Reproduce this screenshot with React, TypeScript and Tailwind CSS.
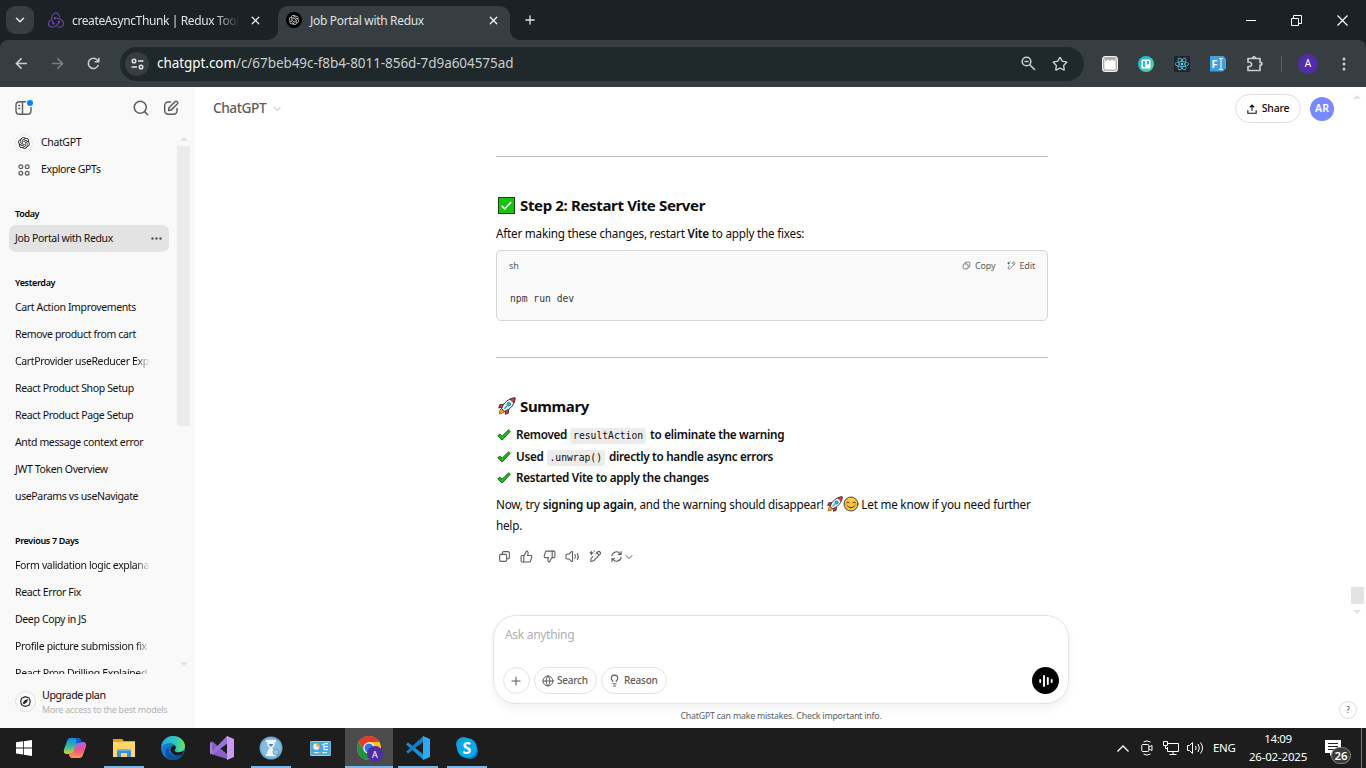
import type { ReactNode } from "react";
import { ChevronDown, Plus, X, Search, Globe, Lightbulb, ThumbsUp, ThumbsDown, Star } from "lucide-react";
import { RiOpenaiFill } from "react-icons/ri";
import { SiRedux, SiReact } from "react-icons/si";

/* ---------- emoji drawings ---------- */
const Rocket = ({ className }: { className: string }) => (
  <svg viewBox="0 0 20 20" className={className}>
    <path d="M7 8 2 8.500 .8 12l4.500-.5zM12 13l-.5 5-3.500 1.200.5-4.500z" fill="#e83a35" stroke="#222" strokeWidth=".9" />
    <path d="M4.500 12.500C2.500 13 1.500 16 1.300 18.700 4 18.500 7 17.500 7.500 15.500z" fill="#ff9f1a" stroke="#7b4a12" strokeWidth=".8" />
    <path d="M4 13C6 6.500 11.500 1.500 19 1c-.5 7.500-5.500 13-12 15z" fill="#e9f1f6" stroke="#222" strokeWidth="1" />
    <path d="M13.300 2.400C15 1.500 17 1.100 19 1c-.1 2-.5 4-1.400 5.700z" fill="#ee3936" stroke="#222" strokeWidth=".7" />
    <circle cx="12" cy="8" r="2" fill="#27b5ef" stroke="#38586a" strokeWidth=".8" />
    <path d="m7 13 4-4" stroke="#27b5ef" strokeWidth="1.700" />
  </svg>
);
const Smile = ({ className }: { className: string }) => (
  <svg viewBox="0 0 16 16" className={className} fill="none" strokeLinecap="round">
    <circle cx="8" cy="8" r="7" fill="#ffc83d" stroke="#333" strokeWidth=".9" />
    <path d="M3.500 6.700q1.300-1.700 2.600 0M9.900 6.700q1.300-1.700 2.600 0M4.200 9.700q3.800 4.400 7.600 0" stroke="#41330f" strokeWidth="1" />
    <circle cx="3.400" cy="9" r="1.200" fill="#ff9b3d" />
    <circle cx="12.600" cy="9" r="1.200" fill="#ff9b3d" />
  </svg>
);
const CheckBox = () => (
  <svg viewBox="0 0 17 17" className="h-[17px] w-[17px]">
    <rect x=".5" y=".5" width="16" height="16" fill="#16c60c" stroke="#1d3b1b" />
    <path d="m3.700 8.900 3 3 6.500-7" fill="none" stroke="#fff" strokeWidth="1.500" />
  </svg>
);
const GreenTick = () => (
  <svg viewBox="0 0 14 12" className="h-3 w-3.5 shrink-0">
    <path d="m.8 7 1.900-2 2.500 2.200L11.500.8l1.700 1.600-8 8.600z" fill="#16c60c" stroke="#1d4a1b" strokeWidth=".9" />
  </svg>
);

/* ---------- line icons ---------- */
const CopyIcon = ({ className }: { className: string }) => (
  <svg viewBox="0 0 24 24" className={className} fill="none" stroke="currentColor" strokeWidth="2">
    <rect x="3" y="8" width="13" height="13" rx="2.500" />
    <path d="M8 8V5.500A2.500 2.500 0 0 1 10.500 3h8A2.500 2.500 0 0 1 21 5.500v8a2.500 2.500 0 0 1-2.500 2.500H16" />
  </svg>
);
const PenSpark = ({ className }: { className: string }) => (
  <svg viewBox="0 0 24 24" className={className} fill="none" stroke="currentColor" strokeWidth="2" strokeLinejoin="round">
    <path d="M12.500 7 16 3.700a3 3 0 0 1 4.300 4.300L9.500 19.300Q8 21 3.300 21.200 3 16 4.700 14.500l2.800-2.800M14.500 5.500l4.200 4.200" />
    <path d="M4.500 1 6 4l3 1.500L6 7 4.500 10 3 7 0 5.500 3 4z" fill="currentColor" stroke="none" />
    <circle cx="10" cy="2" r="1.300" fill="currentColor" stroke="none" />
  </svg>
);
const SpeakerIcon = () => (
  <svg viewBox="0 0 18 16" className="h-[13px] w-[15px]" fill="none" stroke="currentColor" strokeWidth="1.300" strokeLinecap="round" strokeLinejoin="round">
    <path d="M9 2.200v11.600q-.8.500-1.500 0L4.500 11H2.400Q1 11 1 9.500v-3Q1 5 2.400 5h2.100l3-2.800Q8.200 1.700 9 2.200zM12 5.600q1.300 2.400 0 4.800M15 4.300q2.200 3.700 0 7.400" />
  </svg>
);
const RegenIcon = () => (
  <svg viewBox="0 0 24 24" className="h-[13px] w-[13px]" fill="none" stroke="currentColor" strokeWidth="2" strokeLinecap="round">
    <path d="M3.500 10.500A8.600 8.600 0 0 1 19 7M20.500 3v5h-5M20.500 13.500A8.600 8.600 0 0 1 5 17M3.500 21v-5h5" />
  </svg>
);
const PanelIcon = () => (
  <svg viewBox="0 0 18 16" className="h-4 w-[18px]" fill="none" stroke="currentColor" strokeWidth="1.400">
    <path d="M11 1.700H4.500Q1 1.700 1 5.200v5.600q0 3.500 3.500 3.500h8q3.500 0 3.500-3.500V7M7.500 1.700v12.600M3.200 5.500h2M3.200 8.500h2" />
  </svg>
);
const ComposeIcon = () => (
  <svg viewBox="0 0 16 16" className="h-4 w-4" fill="none" stroke="currentColor" strokeWidth="1.500" strokeLinecap="round" strokeLinejoin="round">
    <path d="M7.500 2H5.200A3.500 3.500 0 0 0 1.700 5.500v5.300a3.500 3.500 0 0 0 3.500 3.500h5.300a3.500 3.500 0 0 0 3.500-3.500V8.600" />
    <path d="m6 7.700 5.900-5.900a1.500 1.500 0 0 1 2.300 2.200L8.300 9.900l-2.700.5z" />
  </svg>
);
const Arrow = ({ className }: { className: string }) => (
  <svg viewBox="0 0 14 14" className={className} fill="none" stroke="currentColor" strokeWidth="1.700">
    <path d="M13 7H2M7 1.500 1.500 7 7 12.500" />
  </svg>
);
const Triangle = ({ className }: { className: string }) => (
  <svg viewBox="0 0 8 4" className={className} fill="#e3e3e3"><path d="M0 4 4 0l4 4z" /></svg>
);

/* ---------- browser frame ---------- */
function TabStrip() {
  return (
    <div className="flex h-10 items-center bg-[#1b2225] pl-1.5 text-[12px] text-[#dfe3e4]">
      <div className="flex h-7 w-7 items-center justify-center rounded-[9px] bg-[#373e41]">
        <ChevronDown className="h-3.5 w-3.5" strokeWidth={2.800} />
      </div>
      <div className="ml-[14px] flex w-[230px] items-center">
        <SiRedux className="h-4 w-4 text-[#764abc]" />
        <span className="mt-px ml-2 w-[168px] overflow-hidden whitespace-nowrap tracking-[-0.38px] [mask-image:linear-gradient(to_right,#000_85%,transparent)]">createAsyncThunk | Redux Toolkit</span>
        <X className="ml-[9px] h-[13px] w-[13px] text-white" strokeWidth={2.200} />
      </div>
      <div className="relative mt-1.5 flex h-[34px] w-[232px] items-center rounded-t-[10px] bg-[#373e41] pb-1.5 pl-2">
        <svg className="absolute bottom-0 -left-2.5 h-2.5 w-2.5" viewBox="0 0 10 10"><path d="M10 0v10H0A10 10 0 0 0 10 0" fill="#373e41" /></svg>
        <svg className="absolute -right-2.5 bottom-0 h-2.5 w-2.5" viewBox="0 0 10 10"><path d="M0 0v10h10A10 10 0 0 1 0 0" fill="#373e41" /></svg>
        <span className="flex h-4 w-4 items-center justify-center rounded-full bg-black"><RiOpenaiFill className="h-3 w-3" /></span>
        <span className="mt-px ml-2 w-[177px] whitespace-nowrap tracking-[-0.32px]">Job Portal with Redux</span>
        <X className="h-[13px] w-[13px] text-white" strokeWidth={2.200} />
      </div>
      <Plus className="ml-[13px] h-3.5 w-3.5" strokeWidth={2.300} />
      <div className="ml-auto flex items-center text-white">
        <span className="mr-[35px] h-px w-2.5 bg-white" />
        <svg viewBox="0 0 11 11" className="mr-[35px] h-[11px] w-[11px]" fill="none" stroke="currentColor"><path d="M.5 3.500h7v7h-7zM2.500 3V.5h8v8H8" /></svg>
        <svg viewBox="0 0 11 11" className="mr-[18px] h-[11px] w-[11px]" fill="none" stroke="currentColor" strokeWidth="1.200"><path d="m.5.5 10 10m0-10-10 10" /></svg>
      </div>
    </div>
  );
}

function Toolbar() {
  return (
    <div className="bg-[#1b2225]">
      <div className="flex h-[47px] items-center rounded-t-[8px] bg-[#373e41] pl-[15px] text-[#c9cdce]">
        <Arrow className="h-[13px] w-[13px]" />
        <Arrow className="ml-[23px] h-[13px] w-[13px] rotate-180 text-[#777d80]" />
        <svg viewBox="0 0 14 14" className="ml-[23px] h-[13px] w-[13px]" fill="none" stroke="currentColor" strokeWidth="1.700"><path d="M12.200 8.500A5.500 5.500 0 1 1 11 3.200L12.500 5M12.700.7v4.500H8.200" /></svg>
        <div className="ml-5 flex h-[34px] w-[964px] items-center rounded-full bg-[#1f282b] pl-[5px]">
          <span className="flex h-6 w-6 items-center justify-center rounded-full bg-[#373e41]">
            <svg viewBox="0 0 13 12" className="h-3 w-[13px]" fill="none" stroke="#e2e5e6" strokeWidth="1.500"><circle cx="3" cy="3" r="1.800" /><circle cx="10" cy="9" r="1.800" /><path d="M7 3h5.500M.5 9H6" /></svg>
          </span>
          <span className="ml-2 text-[13.500px] whitespace-nowrap tracking-[-0.06px]"><span className="text-white">chatgpt.com</span>/c/67beb49c-f8b4-8011-856d-7d9a604575ad</span>
          <svg viewBox="0 0 15 15" className="ml-auto h-[15px] w-[15px]" fill="none" stroke="currentColor" strokeWidth="1.600"><circle cx="5.500" cy="5.500" r="4.300" /><path d="m8.700 8.700 5.300 5.300M3.500 5.500h4" /></svg>
          <Star className="mr-4 ml-4 h-4 w-4" strokeWidth={2.100} />
        </div>
        <svg viewBox="0 0 16 16" className="ml-[18px] h-4 w-4"><rect width="16" height="16" rx="3.500" fill="#f4f4f4" /><rect x="1.800" y="1.800" width="12.400" height="12.400" rx="1.500" fill="#fff" stroke="#777" strokeWidth=".8" /><path d="M4 2v3M6 2v2M8 2v3M10 2v2M12 2v3" stroke="#555" strokeWidth=".8" /></svg>
        <svg viewBox="0 0 16 16" className="ml-5 h-4 w-4"><defs><linearGradient id="tr" x2="1" y2="1"><stop stopColor="#18aef0" /><stop offset="1" stopColor="#61d69a" /></linearGradient></defs><circle cx="8" cy="8" r="8" fill="url(#tr)" /><rect x="3.500" y="3.500" width="9" height="9" rx="1" fill="#fff" /><path d="M5 5h2.200v6H5zM8.800 5H11v3.500H8.800z" fill="#30b9d2" /></svg>
        <span className="ml-5 flex h-4 w-4 items-center justify-center bg-[#20262b]"><SiReact className="h-[14px] w-[14px] text-[#61dafb]" /></span>
        <span className="ml-5 flex h-4 w-4 items-center bg-[#42a0e0] pl-[1.500px] text-[11px] leading-none font-semibold text-white [clip-path:polygon(0_0,80%_0,100%_20%,100%_80%,80%_100%,0_100%)]">F
          <svg viewBox="0 0 6 12" className="ml-px h-3 w-1.5" fill="none" stroke="#fff"><path d="M1 .5h1.500L3 1l.5-.5H5M3 1v10M1 11.500h1.500L3 11l.5.5H5" /></svg>
        </span>
        <svg viewBox="0 0 18 18" className="ml-5 h-[18px] w-[18px]" fill="none" stroke="currentColor" strokeWidth="1.700" strokeLinejoin="round"><path d="M2 3.500h12v4h1.500q1 1.300 0 2.600H14v5.400H2v-3.800q4-.2 3.600-2.500Q5.400 7 2 7z" /><path d="M6.500 3q1.500-2.200 3 0" /></svg>
        <span className="ml-[17px] h-4 w-px bg-[#5b6264]" />
        <span className="ml-4 flex h-5 w-5 items-center justify-center rounded-full bg-[#512da8] text-[10px] text-white">A</span>
        <svg viewBox="0 0 4 14" className="ml-6 h-3.5 w-1" fill="currentColor"><circle cx="2" cy="2" r="1.500" /><circle cx="2" cy="7" r="1.500" /><circle cx="2" cy="12" r="1.500" /></svg>
      </div>
    </div>
  );
}

/* ---------- sidebar ---------- */
const chatItem = "h-[27px] w-[136px] overflow-hidden pl-px leading-[27px] whitespace-nowrap";
const fade = "[mask-image:linear-gradient(to_right,#000_90%,transparent)]";
const heading = "pl-px text-[9px] leading-[15px] font-semibold tracking-[-0.33px] text-black";
const yesterday = ["Cart Action Improvements", "Remove product from cart", "CartProvider useReducer Explained", "React Product Shop Setup", "React Product Page Setup", "Antd message context error", "JWT Token Overview", "useParams vs useNavigate"];
const week = ["Form validation logic explanation", "React Error Fix", "Deep Copy in JS", "Profile picture submission fix", "React Prop Drilling Explained"];

function Sidebar() {
  return (
    <aside className="flex w-[195px] shrink-0 flex-col bg-[#f9f9f9]">
      <div className="flex h-[42px] items-center pl-[15px] text-[#5d5d5d]">
        <span className="relative"><PanelIcon /><span className="absolute top-0 left-3 h-1.5 w-1.5 rounded-full bg-[#0285ff]" /></span>
        <Search className="ml-[99px] h-[18px] w-[18px]" strokeWidth={2} />
        <span className="ml-[13px]"><ComposeIcon /></span>
      </div>
      <div className="flex h-[545px] overflow-hidden">
        <div className="w-[177px] pl-3.5 text-[10.500px] tracking-[-0.36px] text-[#111]">
          <div className="flex h-[27px] items-center">
            <span className="ml-px flex h-[18px] w-[18px] items-center justify-center rounded-full border border-[#e8e8e8] bg-white"><RiOpenaiFill className="h-3.5 w-3.5" /></span>
            <span className="ml-2">ChatGPT</span>
          </div>
          <div className="flex h-[27px] items-center">
            <svg viewBox="0 0 12 12" className="ml-1 h-3 w-3" fill="none" stroke="#5d5d5d" strokeWidth="1.200"><circle cx="2.800" cy="2.800" r="1.900" /><circle cx="9.200" cy="2.800" r="1.900" /><circle cx="2.800" cy="9.200" r="1.900" /><circle cx="9.200" cy="9.200" r="1.900" /></svg>
            <span className="ml-[11px]">Explore GPTs</span>
          </div>
          <div className={`mt-[23px] ${heading}`}>Today</div>
          <div className="mt-1 -ml-[5px] flex h-[27px] w-40 items-center justify-between rounded-[7px] bg-[#e3e3e3] pr-[7px] pl-1.5">
            <span className="whitespace-nowrap">Job Portal with Redux</span>
            <svg viewBox="0 0 11 3" className="h-[3px] w-[11px]" fill="#555"><circle cx="1.500" cy="1.500" r="1.200" /><circle cx="5.500" cy="1.500" r="1.200" /><circle cx="9.500" cy="1.500" r="1.200" /></svg>
          </div>
          <div className={`mt-[23px] mb-1 ${heading}`}>Yesterday</div>
          {yesterday.map((t) => <div key={t} className={`${chatItem} ${t.length > 30 ? fade : ""}`}>{t}</div>)}
          <div className={`mt-[23px] mb-1 ${heading}`}>Previous 7 Days</div>
          {week.map((t) => <div key={t} className={`${chatItem} ${t.length > 28 ? fade : ""}`}>{t}</div>)}
        </div>
        <div className="flex w-[13px] flex-col items-center pt-2">
          <Triangle className="h-1 w-2" />
          <div className="mt-[5px] h-[280px] w-[13px] bg-[#ebebeb]" />
          <Triangle className="mt-[236px] h-1 w-2 rotate-180" />
        </div>
      </div>
      <div className="flex h-[54px] items-center pl-[15px]">
        <span className="flex h-[21px] w-[21px] items-center justify-center rounded-full border border-[#e0e0e0]">
          <svg viewBox="0 0 12 12" className="h-[11px] w-[11px]" fill="none" stroke="#222" strokeWidth="1.200"><path d="M6 .7 8 1.500l2 .8.700 1.800.4 1.900-.4 2L10 9.800l-2 .8-2 .7-2-.7-2-.8L1.200 8 .8 6l.4-2L2 2.300l2-.8z" /><path d="M4 8q0-3 4-4-1 4-4 4z" fill="#222" /></svg>
        </span>
        <div className="mt-0.5 ml-1.5 flex flex-col">
          <span className="text-[10.700px] leading-[14px] tracking-[-0.4px] text-[#0d0d0d]">Upgrade plan</span>
          <span className="text-[9px] leading-[15px] tracking-[-0.26px] whitespace-nowrap text-[#b4b4b4]">More access to the best models</span>
        </div>
      </div>
    </aside>
  );
}

/* ---------- conversation ---------- */
const Code = ({ children }: { children: ReactNode }) => (
  <code className="mt-0.5 mr-1 ml-[3px] flex h-4 items-center rounded-[3px] bg-[#ececec] px-[3px] font-['DejaVu_Sans_Mono',monospace] text-[9.700px] font-normal tracking-normal">{children}</code>
);

function Conversation() {
  return (
    <div className="ml-[301px] w-[552px] text-[11.700px] text-[#0d0d0d]">
      <div className="mt-[26px] h-px bg-[#bdbdbd]" />
      <h3 className="mt-[35px] flex h-[26px] items-center gap-[5px] text-[15px] font-bold tracking-[-0.35px]"><span className="ml-0.5"><CheckBox /></span>Step 2: Restart Vite Server</h3>
      <p className="mt-[5px] h-[21px] leading-[21px] tracking-[-0.22px]">After making these changes, restart <b className="font-semibold">Vite</b> to apply the fixes:</p>
      <div className="mt-[6px] h-[71px] rounded-[5px] border border-[#d6d6d6] bg-[#f9f9f9] px-3 text-[9px] text-[#5d5d5d]">
        <div className="flex h-[30px] items-center tracking-[-0.15px]">
          <span>sh</span>
          <span className="ml-auto flex items-center gap-1"><CopyIcon className="-mt-0.5 h-[9px] w-[9px]" />Copy</span>
          <span className="ml-3 flex items-center gap-[3px]"><PenSpark className="-mt-0.5 h-[9px] w-[9px]" />Edit</span>
        </div>
        <pre className="mt-[9px] pl-px font-['DejaVu_Sans_Mono',monospace] text-[9.700px] leading-[18px] text-[#383a42]">npm run dev</pre>
      </div>
      <div className="mt-9 h-px bg-[#bdbdbd]" />
      <h3 className="mt-[35px] flex h-[26px] items-center gap-1 text-[15px] font-bold tracking-[-0.35px]"><Rocket className="ml-0.5 h-[18px] w-[18px]" />Summary</h3>
      <div className="mt-[5px] flex flex-col font-semibold tracking-[-0.29px]">
        <div className="flex h-[22px] items-center"><span className="mr-[5px] ml-px"><GreenTick /></span>Removed<Code>resultAction</Code>to eliminate the warning</div>
        <div className="flex h-[22px] items-center"><span className="mr-[5px] ml-px"><GreenTick /></span>Used<Code>.unwrap()</Code>directly to handle async errors</div>
        <div className="flex h-5 items-center"><span className="mr-[5px] ml-px"><GreenTick /></span>Restarted Vite to apply the changes</div>
      </div>
      <p className="mt-1.5 h-[42px] leading-[21px] tracking-[-0.22px]">Now, try <b className="font-semibold">signing up again</b>, and the warning should disappear! <Rocket className="inline h-4 w-4 align-[-3px]" /><Smile className="inline h-4 w-4 align-[-3px]" /> Let me know if you need further help.</p>
      <div className="mt-[13px] ml-0.5 flex h-[15px] items-center text-[#5d5d5d]">
        <CopyIcon className="h-[13px] w-[13px]" />
        <ThumbsUp className="ml-[9px] h-[13px] w-[13px]" />
        <ThumbsDown className="ml-[10px] h-[13px] w-[13px]" />
        <span className="ml-[9px]"><SpeakerIcon /></span>
        <PenSpark className="ml-[9px] h-[13px] w-[13px]" />
        <span className="ml-[8px]"><RegenIcon /></span>
        <ChevronDown className="h-3 w-3" />
      </div>
    </div>
  );
}

function Composer() {
  const chip = "flex h-[27px] items-center rounded-full border border-[#e3e3e3] text-[10px] font-medium text-[#5d5d5d]";
  return (
    <div className="ml-[298px] w-[576px]">
      <div className="flex h-[89px] flex-col rounded-[23px] border border-[#e2e2e2] bg-white px-[9px] shadow-[0_5px_9px_rgba(0,0,0,0.05)]">
        <div className="mt-[10px] pl-0.5 text-[12px] leading-[18px] tracking-[-0.3px] text-[#b0b0b0]">Ask anything</div>
        <div className="mt-[23px] flex items-center">
          <span className={`${chip} w-[27px] justify-center`}><Plus className="-ml-px h-3.5 w-3.5" strokeWidth={1.800} /></span>
          <span className={`${chip} ml-1 w-[63px] gap-[3px] pl-[7px] tracking-[-0.25px]`}><Globe className="h-3 w-3" />Search</span>
          <span className={`${chip} ml-1 w-[66px] gap-[3px] pl-[6px] tracking-[-0.25px]`}><Lightbulb className="h-[13px] w-[13px]" />Reason</span>
          <span className="ml-auto flex h-[27px] w-[27px] items-center justify-center rounded-full bg-black">
            <svg viewBox="0 0 14 12" className="h-3 w-3.5" stroke="#fff" strokeWidth="1.900" strokeLinecap="round"><path d="M1.200 5v2M5 1v10M8.800 3v6M12.700 5v2" /></svg>
          </span>
        </div>
      </div>
      <div className="mt-1 text-center text-[8.800px] leading-[17px] tracking-[-0.2px] text-[#5d5d5d]">ChatGPT can make mistakes. Check important info.</div>
    </div>
  );
}

function Main() {
  return (
    <main className="flex min-w-0 flex-1 bg-white">
      <div className="w-[1156px] shrink-0">
        <div className="flex h-[43px] items-center pl-[18px]">
          <span className="text-[13.700px] font-medium tracking-[-0.45px] text-[#5d5d5d]">ChatGPT</span>
          <ChevronDown className="ml-[5px] h-3 w-3 text-[#b4b4b4]" />
          <span className="ml-auto flex h-[29px] w-[66px] items-center justify-center gap-[5px] rounded-full border border-[#dedede] text-[10.500px] font-medium tracking-[-0.2px] text-[#0d0d0d]">
            <svg viewBox="0 0 12 12" className="h-[10px] w-[10px]" fill="none" stroke="currentColor" strokeWidth="1.300"><path d="M1 7.500V11h10V7.500M6 8V1.500M3.300 4 6 1.300 8.700 4" /></svg>Share
          </span>
          <span className="mr-[17px] ml-[9px] flex h-6 w-6 items-center justify-center rounded-full bg-[#7989ff] text-[10.500px] font-semibold text-white">AR</span>
        </div>
        <Conversation />
        <div className="h-[51px]" />
        <Composer />
      </div>
      <div className="flex w-[15px] min-w-0 flex-col items-end">
        <Triangle className="mt-2 mr-[5px] h-1 w-2 shrink-0" />
        <div className="mt-[488px] mr-0.5 h-[17px] w-[13px] shrink-0 bg-[#e3e3e3]" />
        <Triangle className="mt-1.5 mr-[5px] h-1 w-2 shrink-0 rotate-180" />
        <span className="mt-[87px] mr-[9px] flex h-[18px] w-[18px] shrink-0 items-center justify-center rounded-full border border-[#ddd] bg-white text-[8px] text-[#444]">?</span>
      </div>
    </main>
  );
}

/* ---------- taskbar ---------- */
const Slot = ({ children, line, wide }: { children: ReactNode; line?: boolean; wide?: boolean }) => (
  <div className={`relative flex h-10 w-12 items-center justify-center ${wide ? "bg-[#4b4b4b]" : ""}`}>
    {children}
    {(line || wide) && <span className={`absolute bottom-0 h-0.5 bg-[#76b9ed] ${wide ? "w-12" : "w-10"}`} />}
  </div>
);

function Taskbar() {
  const ic = "h-6 w-6";
  return (
    <footer className="flex h-10 items-center bg-[#1d1d1d] text-white">
      <Slot><svg viewBox="0 0 16 16" className="h-4 w-4" fill="#fff"><path d="M0 2.300 7 1.300v6.200H0zM7.800 1.200 16 0v7.500H7.800zM0 8.400h7v6.200L0 13.600zM7.800 8.400H16V16l-8.200-1.200z" /></svg></Slot>
      <div className="ml-[3px] flex gap-px">
        <Slot>
          <svg viewBox="0 0 24 24" className={ic}>
            <defs>
              <linearGradient id="c1" x2="0" y2="1"><stop stopColor="#1487e8" /><stop offset=".5" stopColor="#2cb6a6" /><stop offset="1" stopColor="#e4cf26" /></linearGradient>
              <linearGradient id="c2" x2="0" y2="1"><stop stopColor="#a564ee" /><stop offset=".5" stopColor="#f0528a" /><stop offset="1" stopColor="#ff974f" /></linearGradient>
            </defs>
            <path d="M7 2h8q2 0 2.700 2l.7 3h-3q-1.700 0-2.300 2l-2 7q-.7 2-2.500 2H4q-4 0-3-4.500L4 5q.8-3 3-3z" fill="url(#c1)" />
            <path d="M17 22H9q-2 0-2.700-2l-.7-3h3q1.700 0 2.300-2l2-7q.7-2 2.500-2H20q4 0 3 4.500L20 19q-.8 3-3 3z" fill="url(#c2)" />
            <path d="M13 2h2q2 0 2.700 2l.7 3h-3q-1.300 0-2 1.300z" fill="#155bd0" />
          </svg>
        </Slot>
        <Slot line>
          <svg viewBox="0 0 24 24" className={ic}><path d="M1 3h9l2 2h11v6H1z" fill="#e6a11f" /><path d="M1 6h22v15H1z" fill="#ffd766" /><path d="M5 21v-8h14v8h-4v-4H9v4z" fill="#3a8fd6" /><path d="M5 13h14v2H5z" fill="#69b2ec" /></svg>
        </Slot>
        <Slot>
          <svg viewBox="0 0 24 24" className={ic}>
            <defs><linearGradient id="e1"><stop stopColor="#25a9e8" /><stop offset=".6" stopColor="#30c9b6" /><stop offset="1" stopColor="#6de35c" /></linearGradient></defs>
            <circle cx="12" cy="12" r="12" fill="#1678cf" />
            <path d="M.2 11C1 4.500 6 0 12 0c7 0 12 5 12 10 0 4-3 6-6 6-3.500 0-5-1.200-3.500-2.700C16.500 11 14 7.500 9.500 7.300 5 7 1.500 9 .2 11z" fill="url(#e1)" />
            <path d="M9.500 10.500C6.500 12 7 19 14 20q4 .6 8-2.200C20 22 16 24 12 24c-5 0-8-4-7.500-8 .3-3 2-5 5-5.500z" fill="#0d4f9e" />
            <path d="M12.500 9.500c2 0 3 2 1.700 3.500-1.600 2 0 3.800 4 3.300q2.500-.3 4.300-1.800.5 2-.7 3.500C17 21.500 9 19 9.500 13q.5-3 3-3.500z" fill="#1d1d1d" />
          </svg>
        </Slot>
        <Slot>
          <svg viewBox="0 0 24 24" className={ic}><path d="m0 6.500 2.500-1L18 19v5l-1-1L2.500 18.500 0 17.500z" fill="#8661c5" /><path d="M0 17.500V6.500l2 1v9z" fill="#a783df" /><path d="M2.500 18.500 0 17.500 17 0l1 .2V7z" fill="#9a72d8" /><path d="m17 0 7 3v18l-7 3z" fill="#c79af5" /></svg>
        </Slot>
        <Slot line>
          <svg viewBox="0 0 24 24" className={ic}><circle cx="12" cy="12" r="11.500" fill="#6aaad0" /><circle cx="12" cy="12" r="10" fill="#85bedf" /><path d="M7 4h10v2H7zM7 18h10v2H7z" fill="#f3f8fa" /><path d="M8 6h8q0 4-3 6 3 2 3 6H8q0-4 3-6-3-2-3-6z" fill="#eef5f8" /><path d="M9.500 8h5L12 11z" fill="#4d86a9" /><circle cx="17" cy="16" r="3" fill="#94c8e2" stroke="#4d86a9" strokeWidth=".7" /></svg>
        </Slot>
        <Slot>
          <svg viewBox="0 0 22 16" className="h-[15px] w-[21px]"><rect width="22" height="16" rx="1" fill="#8fd3f6" /><rect x="1" y="1" width="20" height="14" fill="#46a9e2" /><circle cx="6.500" cy="6" r="3.300" fill="#e9f5fc" /><path d="M6.500 6V2.500A3.500 3.500 0 0 1 10 6z" fill="#f2a33a" /><path d="M12.500 4h2.200m0-1.200v6.400m0-6.400H19m-4.300 3.200H19m-4.300 3.200H19M4 12.500h5m4 0h5" stroke="#d9effb" strokeWidth="1.300" fill="none" /><path d="M9 12.500h2" stroke="#ffa82e" strokeWidth="1.500" /></svg>
        </Slot>
        <Slot wide>
          <span className="relative h-6 w-6">
            <svg viewBox="0 0 24 24" className={ic}><circle cx="12" cy="12" r="12" fill="#fbc116" /><path d="M1.600 6A12 12 0 0 1 22.400 6H12L7 15z" fill="#e33b2e" /><path d="M1.600 6A12 12 0 0 0 12 24l5-9-5 2.500L7 15z" fill="#229342" /><circle cx="12" cy="12" r="5.700" fill="#fff" /><circle cx="12" cy="12" r="4.500" fill="#2d75e9" /></svg>
            <span className="absolute top-[10px] left-[10px] flex h-4 w-4 items-center justify-center rounded-full bg-[#512da8] text-[9px] leading-none">A</span>
          </span>
        </Slot>
        <Slot line>
          <svg viewBox="0 0 24 24" className={ic}><path d="M0 8.300 2 6.500 17.500 18.500V24z" fill="#1590db" /><path d="m0 15.700 2 1.800L17.500 5.500V0z" fill="#1180c8" /><path d="m17 0 7 3v18l-7 3z" fill="#30a9f2" /></svg>
        </Slot>
        <Slot line>
          <svg viewBox="0 0 24 24" className={ic}><circle cx="8.500" cy="8.500" r="7.500" fill="#1795d8" /><circle cx="15.500" cy="15.500" r="7.500" fill="#0078c8" /><circle cx="12" cy="12" r="10" fill="#08a9e8" /><text x="12" y="17.800" textAnchor="middle" fill="#fff" fontSize="16" fontWeight="700" fontFamily="Noto Sans, sans-serif">S</text></svg>
        </Slot>
      </div>
      <div className="ml-auto flex h-10 items-center">
        <svg viewBox="0 0 12 7" className="h-[7px] w-3" fill="none" stroke="#fff" strokeWidth="1.300"><path d="m.5 6.500 5.500-5.500 5.500 5.500" /></svg>
        <svg viewBox="0 0 12 16" className="ml-3 h-4 w-3" fill="none" stroke="#fff"><rect x=".8" y="4.500" width="7" height="7" rx="1" /><path d="m8 7 3-1.500v5L8 9M2.500 2Q6-.2 9.500 2M2.500 14q3.500 2.200 7 0" /></svg>
        <svg viewBox="0 0 16 14" className="ml-[10px] h-3.5 w-4" fill="none" stroke="#fff"><path d="M5 2.500h10.500v8H4.500V6M10 10.500v3M6.500 13.500h7M.5.5h4v4h-4zM2.500 4.500v3h2" /></svg>
        <svg viewBox="0 0 17 14" className="ml-2 h-3.5 w-[17px]" fill="none" stroke="#fff"><path d="M.5 4.500h2l3-3v11l-3-3h-2zM8.500 5q1.300 2 0 4M11 3q2.700 4 0 8M13.500 1.500q4 5.500 0 11" /></svg>
        <span className="ml-[9px] w-[24px] text-[11.500px] tracking-[-0.3px]">ENG</span>
        <div className="ml-[9px] flex w-[64px] flex-col items-center text-[11.500px] leading-[18px] tracking-[-0.18px] whitespace-nowrap"><span className="tracking-[-0.4px]">14:09</span><span>26-02-2025</span></div>
        <span className="relative ml-[15px] h-4 w-4">
          <svg viewBox="0 0 16 16" className="h-4 w-4"><path d="M0 0h16v13H8l-3 3v-3H0z" fill="#fff" /><path d="M3 3.500h10M3 6.500h10M3 9.500h6" stroke="#222" /></svg>
          <span className="absolute top-[7px] left-[6px] flex h-[17px] w-5 items-center justify-center rounded-full border border-[#888] bg-[#3b3b3b] text-[11.500px] leading-none font-semibold">26</span>
        </span>
        <span className="mr-1 ml-5 h-10 w-px bg-[#777]" />
      </div>
    </footer>
  );
}

export default function App() {
  return (
    <div className="flex h-[768px] w-[1366px] flex-col overflow-hidden font-['Noto_Sans',sans-serif]">
      <TabStrip />
      <Toolbar />
      <div className="flex h-[641px]">
        <Sidebar />
        <Main />
      </div>
      <Taskbar />
    </div>
  );
}
